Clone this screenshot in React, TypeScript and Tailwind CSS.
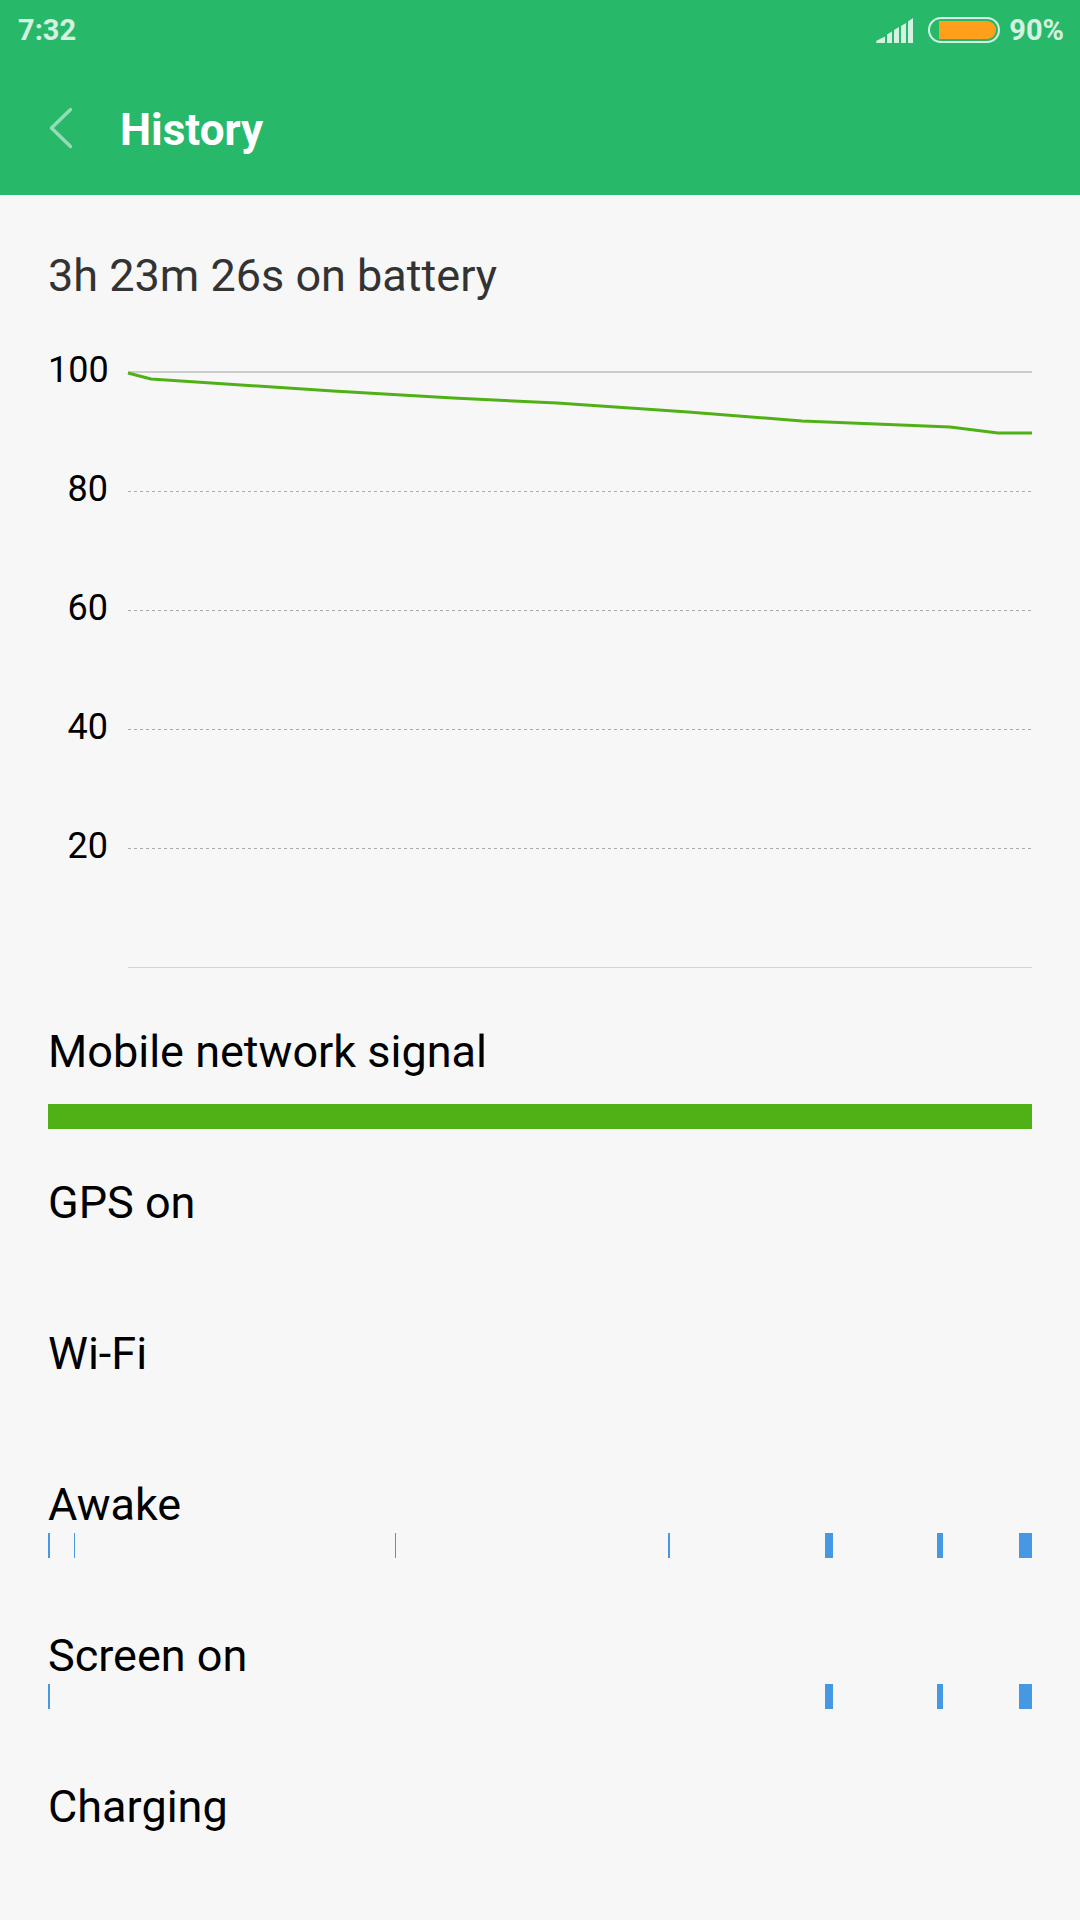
const levels = [100, 80, 60, 40, 20];

// Battery level over time, in chart units (904 wide, 596 high).
const batteryLine =
  '0,1 23,7 205,19 325,26 429,31 560,40 674,49 822,55 870,61 904,61';

interface Span {
  start: number;
  length: number;
}

interface HistoryRow {
  title: string;
  spans: Span[];
}

// Spans are measured on a timeline of 984 units.
const TIMELINE = 984;

const rows: HistoryRow[] = [
  { title: 'GPS on', spans: [] },
  { title: 'Wi-Fi', spans: [] },
  {
    title: 'Awake',
    spans: [
      { start: 0, length: 2 },
      { start: 26, length: 1 },
      { start: 347, length: 1 },
      { start: 620, length: 2 },
      { start: 777, length: 8 },
      { start: 889, length: 6 },
      { start: 971, length: 13 },
    ],
  },
  {
    title: 'Screen on',
    spans: [
      { start: 0, length: 2 },
      { start: 777, length: 8 },
      { start: 889, length: 6 },
      { start: 971, length: 13 },
    ],
  },
  { title: 'Charging', spans: [] },
];

function StatusBar() {
  return (
    <div className="flex h-[60px] items-center justify-between pr-4 pl-[18px] text-[29px] font-bold text-white/80">
      <span className="pt-[2px]">7:32</span>
      <div className="flex items-center">
        <svg width="37" height="25" viewBox="0 0 37 25" fill="currentColor" aria-hidden="true">
          <path d="M0 24 Q0 23 1 22.500L9 18.500V25H1Q0 25 0 24Z" />
          <path d="M11 16.500L16 13.500V25H11Z" />
          <path d="M18 12L23 9V25H18Z" />
          <path d="M25 8L30 5V25H25Z" />
          <path d="M32 3.500L37 0V25H32Z" />
        </svg>
        <svg className="ml-[15px]" width="72" height="26" viewBox="0 0 72 26" aria-hidden="true">
          <rect x="1" y="1" width="70" height="24" rx="12" fill="none" stroke="currentColor" strokeWidth="2" />
          <path d="M11 4H59A9 9 0 0 1 59 22H11Z" fill="#ff9f1c" />
        </svg>
        <span className="ml-[9px] pt-[2px]">90%</span>
      </div>
    </div>
  );
}

function Header() {
  return (
    <header className="bg-[#28b869]">
      <StatusBar />
      <div className="flex h-[135px] items-center pl-12">
        <button type="button" aria-label="Back" className="text-white/50">
          <svg width="26" height="42" viewBox="0 0 26 42" fill="none">
            <path d="M22.500 2.500L3.500 21L22.500 39.500" stroke="currentColor" strokeWidth="3.500" strokeLinecap="round" strokeLinejoin="round" />
          </svg>
        </button>
        <h1 className="ml-[46px] pt-1 text-[44px] font-bold text-white">History</h1>
      </div>
    </header>
  );
}

function BatteryChart() {
  return (
    <div className="flex gap-5">
      <div className="-mt-[23px] w-[60px] text-right text-[36px] leading-[42px]">
        {levels.map((level) => (
          <div key={level} className="h-[119px]">{level}</div>
        ))}
      </div>
      <svg
        className="h-[596px] min-w-0 flex-1 overflow-visible"
        viewBox="0 0 904 596"
        preserveAspectRatio="none"
        role="img"
        aria-label="Battery level"
      >
        <path d="M0 0H904" stroke="#cccccc" strokeWidth="2" />
        {levels.slice(1).map((level) => (
          <path
            key={level}
            d={`M0 ${(100 - level) * 5.95 + 0.5}H904`}
            stroke="#aaaaaa"
            strokeDasharray="3 3"
          />
        ))}
        <path d="M0 595.500H904" stroke="#d4d4d4" />
        <polyline points={batteryLine} fill="none" stroke="#50b117" strokeWidth="3" strokeLinejoin="round" />
      </svg>
    </div>
  );
}

function Timeline({ spans }: { spans: Span[] }) {
  return (
    <svg
      className="block h-[25px] w-full"
      viewBox={`0 0 ${TIMELINE} 25`}
      preserveAspectRatio="none"
      shapeRendering="crispEdges"
      fill="#4698e2"
      aria-hidden="true"
    >
      {spans.map((span) => (
        <rect key={span.start} x={span.start} width={span.length} height="25" />
      ))}
    </svg>
  );
}

export default function App() {
  return (
    <div className="min-h-screen bg-[#f7f7f7] font-['Roboto',sans-serif] text-black">
      <Header />
      <main className="px-12">
        <h2 className="pt-[54px] pb-[69px] text-[45px] leading-[54px] text-[#333333]">
          3h 23m 26s on battery
        </h2>
        <BatteryChart />
        <section className="mt-[57px] h-[151px] text-[45px] leading-[54px]">
          <h3>Mobile network signal</h3>
          <div className="mt-[25px] h-[25px] bg-[#50b117]" />
        </section>
        {rows.map((row) => (
          <section key={row.title} className="h-[151px] text-[45px] leading-[54px] last:h-auto">
            <h3 className="mb-px">{row.title}</h3>
            <Timeline spans={row.spans} />
          </section>
        ))}
      </main>
    </div>
  );
}
